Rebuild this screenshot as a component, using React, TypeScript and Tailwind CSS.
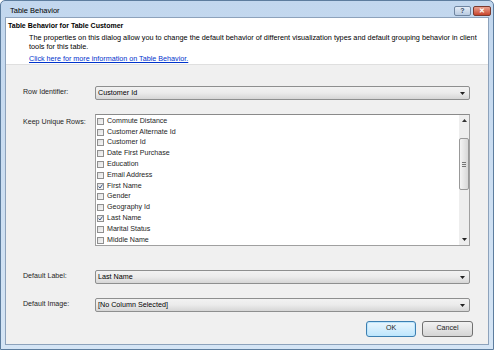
const items: [string, boolean][] = [
  ["Commute Distance", false],
  ["Customer Alternate Id", false],
  ["Customer Id", false],
  ["Date First Purchase", false],
  ["Education", false],
  ["Email Address", false],
  ["First Name", true],
  ["Gender", false],
  ["Geography Id", false],
  ["Last Name", true],
  ["Marital Status", false],
  ["Middle Name", false],
];

function Arrow() {
  return (
    <svg width="5" height="3" viewBox="0 0 5 3" className="block">
      <path d="M0 0h5L2.5 3z" fill="#222" />
    </svg>
  );
}

function Combo({ value }: { value: string }) {
  return (
    <div className="flex h-[14px] w-[375px] items-center justify-between rounded-[2px] border border-[#8e8f8f] bg-gradient-to-b from-[#f2f2f2] via-[#ebebeb] to-[#d6d6d6] pl-[2px] pr-[4px] text-[7.2px] leading-none text-black">
      <span>{value}</span>
      <Arrow />
    </div>
  );
}

function Check({ on }: { on: boolean }) {
  return (
    <div className="flex h-[7px] w-[7px] items-center justify-center border border-[#8f8f8f] bg-gradient-to-br from-[#e0e0e0] to-[#f6f6f6]">
      {on && (
        <svg width="5" height="5" viewBox="0 0 5 5">
          <path d="M0.5 2.5 L2 4 L4.5 0.5" stroke="#3d5a8a" strokeWidth="1" fill="none" />
        </svg>
      )}
    </div>
  );
}

export default function App() {
  return (
    <div
      className="flex h-[350px] w-[494px] flex-col overflow-hidden rounded-t-[5px] border border-[#5d7d9e] bg-gradient-to-b from-[#c2d7ee] to-[#d5e5f5] text-[#1e1e1e]"
      style={{ fontFamily: '"Liberation Sans", Arial, sans-serif' }}
    >
      <div className="flex h-[16px] shrink-0 items-center justify-between pl-[9px] pr-[2px]">
        <span className="pt-[3px] text-[7.5px] text-black">Table Behavior</span>
        <div className="flex items-center gap-[2px] pt-[3px]">
          <div className="flex h-[10px] w-[17px] items-center justify-center rounded-[2px] border border-[#6f85a0] bg-gradient-to-b from-[#e4ecf6] to-[#b9cbe1] text-[7px] font-bold leading-none text-[#3a4d66]">
            ?
          </div>
          <div className="flex h-[10px] w-[18px] items-center justify-center rounded-[2px] border border-[#7a3a2e] bg-gradient-to-b from-[#e9a08f] to-[#c7432b] text-[7px] font-bold leading-none text-white">
            ✕
          </div>
        </div>
      </div>
      <div className="mx-[4px] mb-[4px] flex flex-1 flex-col border border-[#8da2bb] bg-[#f0f0f0]">
        <div className="h-[47px] shrink-0 border-b border-[#dfdfdf] bg-white pl-[2px] pt-[3px] text-[8px] leading-[9px]">
          <div className="text-[7px] font-bold text-black">Table Behavior for Table Customer</div>
          <div className="mt-[3px] whitespace-nowrap pl-[21px] text-[7.3px] text-black">
            The properties on this dialog allow you to change the default behavior of different visualization types and default grouping behavior in client
            <br />
            tools for this table.
          </div>
          <div className="mt-[3px] pl-[21px] text-[7.2px] text-[#0033cc] underline">Click here for more information on Table Behavior.</div>
        </div>
        <div className="flex flex-1 flex-col pl-[17px] pt-[21px] text-[7.1px] leading-none">
          <div className="flex items-center">
            <div className="w-[72px]">Row Identifier:</div>
            <Combo value="Customer Id" />
          </div>
          <div className="mt-[14px] flex">
            <div className="w-[72px] pt-[5px]">Keep Unique Rows:</div>
            <div className="flex h-[132px] w-[375px] border border-[#a0a0a0] border-t-[#8a8a8a] bg-white">
              <div className="flex-1 pl-[1px] pt-[1px]">
                {items.map(([name, on]) => (
                  <div key={name} className="flex h-[10.8px] items-center gap-[3px]">
                    <Check on={on} />
                    <span>{name}</span>
                  </div>
                ))}
              </div>
              <div className="flex w-[10px] flex-col bg-[#eeeeee]">
                <div className="flex h-[11px] items-center justify-center">
                  <svg width="5" height="3" viewBox="0 0 5 3">
                    <path d="M0 3h5L2.5 0z" fill="#333" />
                  </svg>
                </div>
                <div className="mt-[12px] flex h-[52px] items-center justify-center rounded-[2px] border border-[#999] bg-gradient-to-r from-[#f4f4f4] to-[#d8d8d8]">
                  <div className="flex flex-col gap-[1px]">
                    <div className="h-px w-[4px] bg-[#777]" />
                    <div className="h-px w-[4px] bg-[#777]" />
                    <div className="h-px w-[4px] bg-[#777]" />
                  </div>
                </div>
                <div className="flex-1" />
                <div className="flex h-[11px] items-center justify-center">
                  <Arrow />
                </div>
              </div>
            </div>
          </div>
          <div className="mt-[24px] flex items-center">
            <div className="w-[72px]">Default Label:</div>
            <Combo value="Last Name" />
          </div>
          <div className="mt-[14px] flex items-center">
            <div className="w-[72px]">Default Image:</div>
            <Combo value="[No Column Selected]" />
          </div>
          <div className="mt-[9px] flex justify-end gap-[6px] pr-[15px]">
            <div className="flex h-[16px] w-[50px] items-center justify-center rounded-[3px] border border-[#3c7fb1] bg-gradient-to-b from-[#eaf6fd] to-[#bee6fd] shadow-[inset_0_0_0_1px_#bde6fd]">
              OK
            </div>
            <div className="flex h-[16px] w-[51px] items-center justify-center rounded-[3px] border border-[#707070] bg-gradient-to-b from-[#f2f2f2] to-[#d5d5d5]">
              Cancel
            </div>
          </div>
        </div>
      </div>
    </div>
  );
}
